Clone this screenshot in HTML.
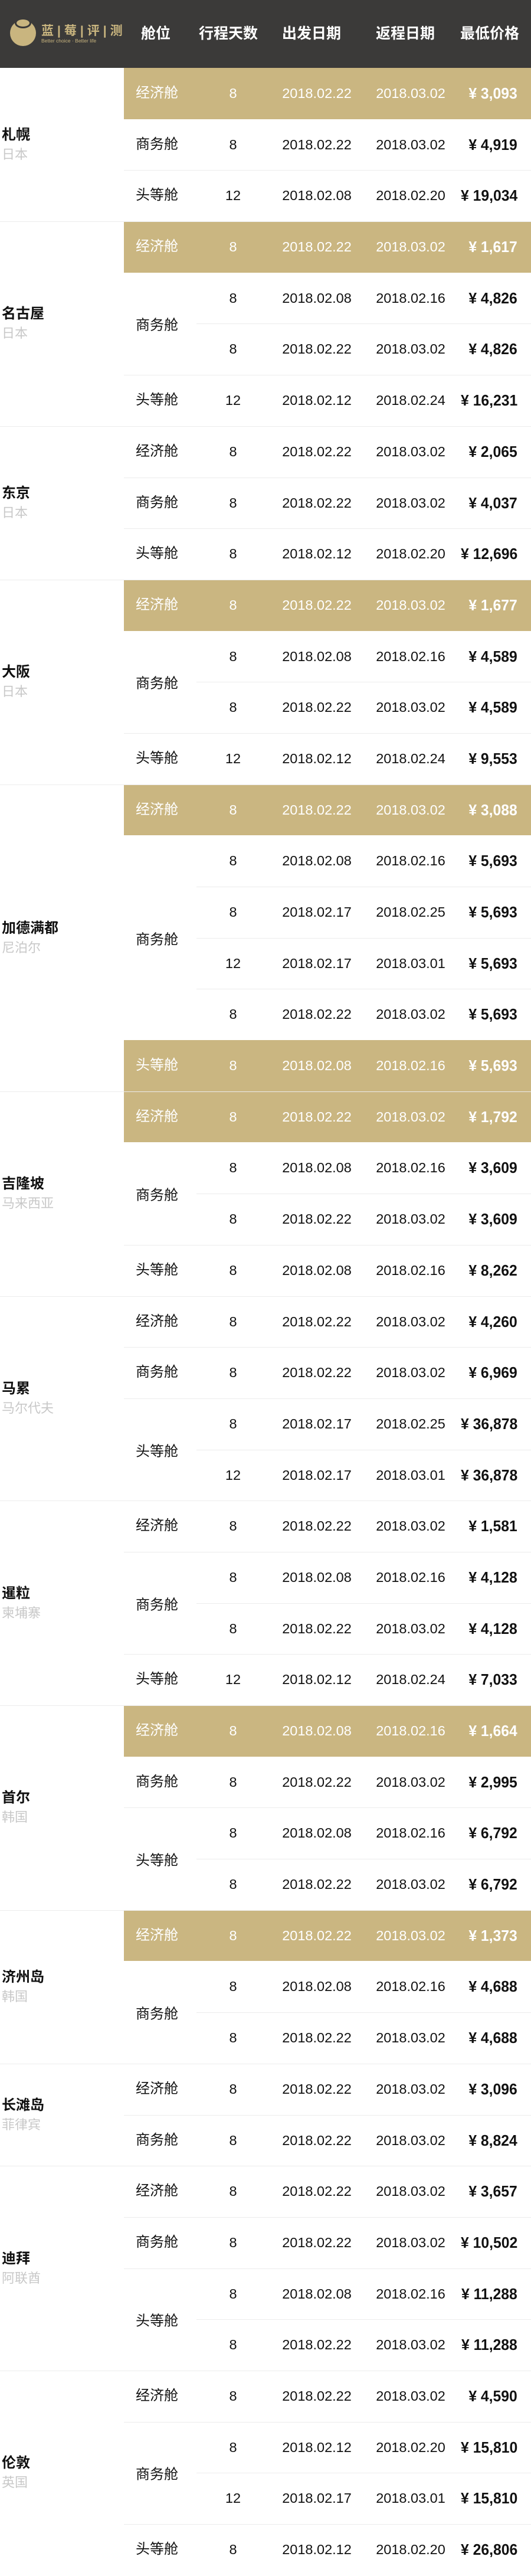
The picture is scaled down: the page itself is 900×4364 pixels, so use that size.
<!DOCTYPE html>
<html><head><meta charset="utf-8">
<style>
*{margin:0;padding:0;box-sizing:border-box}
body{width:900px;height:4364px;background:#fff;font-family:"Liberation Sans","Noto Sans CJK SC",sans-serif;color:#111;overflow:hidden}
.hd{height:115px;background:#3b3a39;position:relative;color:#fff}
.hd .h{position:absolute;top:0;line-height:115px;font-size:25px;font-weight:bold;width:140px;text-align:center}
.logo{position:absolute;left:17px;top:34px;width:44px;height:44px;border-radius:50%;background:#c9b57f}
.logo:before{content:"";position:absolute;left:8px;top:-4px;width:22px;height:12px;border-radius:50%;border:3px solid #3b3a39;background:#c9b57f}
.lt{position:absolute;left:70px;top:36px;color:#c9b57f;font-size:21px;font-weight:bold;letter-spacing:6px;white-space:nowrap}
.lt2{position:absolute;left:70px;top:64px;color:#c9b57f;font-size:8.5px;white-space:nowrap}
.sec{position:relative}
.sec:before{content:"";position:absolute;left:0;right:0;top:0;height:1px;background:#ececec;z-index:2}
.sec.first:before{display:none}
.city{position:absolute;left:3px;top:50%;transform:translateY(-50%);width:200px}
.city b{display:block;font-size:24px;line-height:33px;font-weight:bold}
.city span{display:block;font-size:22px;line-height:33px;color:#c8c8c8}
.rows{margin-left:210px;position:relative}
.r{position:relative;height:86.7px;line-height:86.7px;font-size:23.5px}
.r:before{content:"";position:absolute;left:0;right:0;top:0;height:1px;background:#ececec}
.r.first:before{display:none}
.r.sub:before{left:123px}
.r.g{background:#cab681;color:#fff}
.r.g:before{display:none}
.r i{font-style:normal;position:absolute;top:0;text-align:center}
.c{position:absolute;left:20px;font-weight:normal;font-size:24px}
.d{left:155px;width:60px}
.a{left:252px;width:150px}
.b{left:411px;width:150px}
.r i.p{right:23px;text-align:right;font-family:"Liberation Sans Narrow","Liberation Sans",sans-serif;font-weight:bold;font-size:26px;transform:scaleX(.95);transform-origin:right}
.grp{position:relative}
.grp:before{content:"";position:absolute;left:0;right:0;top:0;height:1px;background:#ececec;z-index:1}
.grp.first:before{display:none}
.gl{position:absolute;left:20px;top:50%;transform:translateY(-50%);font-size:24px;font-weight:normal;z-index:2}
.grp .r.top:before{display:none}
</style></head><body>
<div class="hd">
<div class="logo"></div>
<div class="lt">蓝|莓|评|测</div>
<div class="lt2">Better choice · Better life</div>
<div class="h" style="left:194px">舱位</div>
<div class="h" style="left:317px">行程天数</div>
<div class="h" style="left:458px">出发日期</div>
<div class="h" style="left:617px">返程日期</div>
<div class="h" style="left:760px">最低价格</div>
</div>

<!-- 札幌 -->
<div class="sec first"><div class="city"><b>札幌</b><span>日本</span></div><div class="rows">
<div class="r g first"><b class="c">经济舱</b><i class="d">8</i><i class="a">2018.02.22</i><i class="b">2018.03.02</i><i class="p">¥ 3,093</i></div>
<div class="r first"><b class="c">商务舱</b><i class="d">8</i><i class="a">2018.02.22</i><i class="b">2018.03.02</i><i class="p">¥ 4,919</i></div>
<div class="r"><b class="c">头等舱</b><i class="d">12</i><i class="a">2018.02.08</i><i class="b">2018.02.20</i><i class="p">¥ 19,034</i></div>
</div></div>

<!-- 名古屋 -->
<div class="sec"><div class="city"><b>名古屋</b><span>日本</span></div><div class="rows">
<div class="r g"><b class="c">经济舱</b><i class="d">8</i><i class="a">2018.02.22</i><i class="b">2018.03.02</i><i class="p">¥ 1,617</i></div>
<div class="grp first"><b class="gl">商务舱</b>
<div class="r top"><i class="d">8</i><i class="a">2018.02.08</i><i class="b">2018.02.16</i><i class="p">¥ 4,826</i></div>
<div class="r sub"><i class="d">8</i><i class="a">2018.02.22</i><i class="b">2018.03.02</i><i class="p">¥ 4,826</i></div>
</div>
<div class="r"><b class="c">头等舱</b><i class="d">12</i><i class="a">2018.02.12</i><i class="b">2018.02.24</i><i class="p">¥ 16,231</i></div>
</div></div>

<!-- 东京 -->
<div class="sec"><div class="city"><b>东京</b><span>日本</span></div><div class="rows">
<div class="r first"><b class="c">经济舱</b><i class="d">8</i><i class="a">2018.02.22</i><i class="b">2018.03.02</i><i class="p">¥ 2,065</i></div>
<div class="r"><b class="c">商务舱</b><i class="d">8</i><i class="a">2018.02.22</i><i class="b">2018.03.02</i><i class="p">¥ 4,037</i></div>
<div class="r"><b class="c">头等舱</b><i class="d">8</i><i class="a">2018.02.12</i><i class="b">2018.02.20</i><i class="p">¥ 12,696</i></div>
</div></div>

<!-- 大阪 -->
<div class="sec"><div class="city"><b>大阪</b><span>日本</span></div><div class="rows">
<div class="r g"><b class="c">经济舱</b><i class="d">8</i><i class="a">2018.02.22</i><i class="b">2018.03.02</i><i class="p">¥ 1,677</i></div>
<div class="grp first"><b class="gl">商务舱</b>
<div class="r top"><i class="d">8</i><i class="a">2018.02.08</i><i class="b">2018.02.16</i><i class="p">¥ 4,589</i></div>
<div class="r sub"><i class="d">8</i><i class="a">2018.02.22</i><i class="b">2018.03.02</i><i class="p">¥ 4,589</i></div>
</div>
<div class="r"><b class="c">头等舱</b><i class="d">12</i><i class="a">2018.02.12</i><i class="b">2018.02.24</i><i class="p">¥ 9,553</i></div>
</div></div>

<!-- 加德满都 -->
<div class="sec"><div class="city"><b>加德满都</b><span>尼泊尔</span></div><div class="rows">
<div class="r g"><b class="c">经济舱</b><i class="d">8</i><i class="a">2018.02.22</i><i class="b">2018.03.02</i><i class="p">¥ 3,088</i></div>
<div class="grp first"><b class="gl">商务舱</b>
<div class="r top"><i class="d">8</i><i class="a">2018.02.08</i><i class="b">2018.02.16</i><i class="p">¥ 5,693</i></div>
<div class="r sub"><i class="d">8</i><i class="a">2018.02.17</i><i class="b">2018.02.25</i><i class="p">¥ 5,693</i></div>
<div class="r sub"><i class="d">12</i><i class="a">2018.02.17</i><i class="b">2018.03.01</i><i class="p">¥ 5,693</i></div>
<div class="r sub"><i class="d">8</i><i class="a">2018.02.22</i><i class="b">2018.03.02</i><i class="p">¥ 5,693</i></div>
</div>
<div class="r g"><b class="c">头等舱</b><i class="d">8</i><i class="a">2018.02.08</i><i class="b">2018.02.16</i><i class="p">¥ 5,693</i></div>
</div></div>

<!-- 吉隆坡 -->
<div class="sec"><div class="city"><b>吉隆坡</b><span>马来西亚</span></div><div class="rows">
<div class="r g"><b class="c">经济舱</b><i class="d">8</i><i class="a">2018.02.22</i><i class="b">2018.03.02</i><i class="p">¥ 1,792</i></div>
<div class="grp first"><b class="gl">商务舱</b>
<div class="r top"><i class="d">8</i><i class="a">2018.02.08</i><i class="b">2018.02.16</i><i class="p">¥ 3,609</i></div>
<div class="r sub"><i class="d">8</i><i class="a">2018.02.22</i><i class="b">2018.03.02</i><i class="p">¥ 3,609</i></div>
</div>
<div class="r"><b class="c">头等舱</b><i class="d">8</i><i class="a">2018.02.08</i><i class="b">2018.02.16</i><i class="p">¥ 8,262</i></div>
</div></div>

<!-- 马累 -->
<div class="sec"><div class="city"><b>马累</b><span>马尔代夫</span></div><div class="rows">
<div class="r first"><b class="c">经济舱</b><i class="d">8</i><i class="a">2018.02.22</i><i class="b">2018.03.02</i><i class="p">¥ 4,260</i></div>
<div class="r"><b class="c">商务舱</b><i class="d">8</i><i class="a">2018.02.22</i><i class="b">2018.03.02</i><i class="p">¥ 6,969</i></div>
<div class="grp"><b class="gl">头等舱</b>
<div class="r top"><i class="d">8</i><i class="a">2018.02.17</i><i class="b">2018.02.25</i><i class="p">¥ 36,878</i></div>
<div class="r sub"><i class="d">12</i><i class="a">2018.02.17</i><i class="b">2018.03.01</i><i class="p">¥ 36,878</i></div>
</div>
</div></div>

<!-- 暹粒 -->
<div class="sec"><div class="city"><b>暹粒</b><span>柬埔寨</span></div><div class="rows">
<div class="r first"><b class="c">经济舱</b><i class="d">8</i><i class="a">2018.02.22</i><i class="b">2018.03.02</i><i class="p">¥ 1,581</i></div>
<div class="grp"><b class="gl">商务舱</b>
<div class="r top"><i class="d">8</i><i class="a">2018.02.08</i><i class="b">2018.02.16</i><i class="p">¥ 4,128</i></div>
<div class="r sub"><i class="d">8</i><i class="a">2018.02.22</i><i class="b">2018.03.02</i><i class="p">¥ 4,128</i></div>
</div>
<div class="r"><b class="c">头等舱</b><i class="d">12</i><i class="a">2018.02.12</i><i class="b">2018.02.24</i><i class="p">¥ 7,033</i></div>
</div></div>

<!-- 首尔 -->
<div class="sec"><div class="city"><b>首尔</b><span>韩国</span></div><div class="rows">
<div class="r g"><b class="c">经济舱</b><i class="d">8</i><i class="a">2018.02.08</i><i class="b">2018.02.16</i><i class="p">¥ 1,664</i></div>
<div class="r first"><b class="c">商务舱</b><i class="d">8</i><i class="a">2018.02.22</i><i class="b">2018.03.02</i><i class="p">¥ 2,995</i></div>
<div class="grp"><b class="gl">头等舱</b>
<div class="r top"><i class="d">8</i><i class="a">2018.02.08</i><i class="b">2018.02.16</i><i class="p">¥ 6,792</i></div>
<div class="r sub"><i class="d">8</i><i class="a">2018.02.22</i><i class="b">2018.03.02</i><i class="p">¥ 6,792</i></div>
</div>
</div></div>

<!-- 济州岛 -->
<div class="sec"><div class="city"><b>济州岛</b><span>韩国</span></div><div class="rows">
<div class="r g"><b class="c">经济舱</b><i class="d">8</i><i class="a">2018.02.22</i><i class="b">2018.03.02</i><i class="p">¥ 1,373</i></div>
<div class="grp first"><b class="gl">商务舱</b>
<div class="r top"><i class="d">8</i><i class="a">2018.02.08</i><i class="b">2018.02.16</i><i class="p">¥ 4,688</i></div>
<div class="r sub"><i class="d">8</i><i class="a">2018.02.22</i><i class="b">2018.03.02</i><i class="p">¥ 4,688</i></div>
</div>
</div></div>

<!-- 长滩岛 -->
<div class="sec"><div class="city"><b>长滩岛</b><span>菲律宾</span></div><div class="rows">
<div class="r first"><b class="c">经济舱</b><i class="d">8</i><i class="a">2018.02.22</i><i class="b">2018.03.02</i><i class="p">¥ 3,096</i></div>
<div class="r"><b class="c">商务舱</b><i class="d">8</i><i class="a">2018.02.22</i><i class="b">2018.03.02</i><i class="p">¥ 8,824</i></div>
</div></div>

<!-- 迪拜 -->
<div class="sec"><div class="city"><b>迪拜</b><span>阿联酋</span></div><div class="rows">
<div class="r first"><b class="c">经济舱</b><i class="d">8</i><i class="a">2018.02.22</i><i class="b">2018.03.02</i><i class="p">¥ 3,657</i></div>
<div class="r"><b class="c">商务舱</b><i class="d">8</i><i class="a">2018.02.22</i><i class="b">2018.03.02</i><i class="p">¥ 10,502</i></div>
<div class="grp"><b class="gl">头等舱</b>
<div class="r top"><i class="d">8</i><i class="a">2018.02.08</i><i class="b">2018.02.16</i><i class="p">¥ 11,288</i></div>
<div class="r sub"><i class="d">8</i><i class="a">2018.02.22</i><i class="b">2018.03.02</i><i class="p">¥ 11,288</i></div>
</div>
</div></div>

<!-- 伦敦 -->
<div class="sec"><div class="city"><b>伦敦</b><span>英国</span></div><div class="rows">
<div class="r first"><b class="c">经济舱</b><i class="d">8</i><i class="a">2018.02.22</i><i class="b">2018.03.02</i><i class="p">¥ 4,590</i></div>
<div class="grp"><b class="gl">商务舱</b>
<div class="r top"><i class="d">8</i><i class="a">2018.02.12</i><i class="b">2018.02.20</i><i class="p">¥ 15,810</i></div>
<div class="r sub"><i class="d">12</i><i class="a">2018.02.17</i><i class="b">2018.03.01</i><i class="p">¥ 15,810</i></div>
</div>
<div class="r"><b class="c">头等舱</b><i class="d">8</i><i class="a">2018.02.12</i><i class="b">2018.02.20</i><i class="p">¥ 26,806</i></div>
</div></div>
</body></html>
